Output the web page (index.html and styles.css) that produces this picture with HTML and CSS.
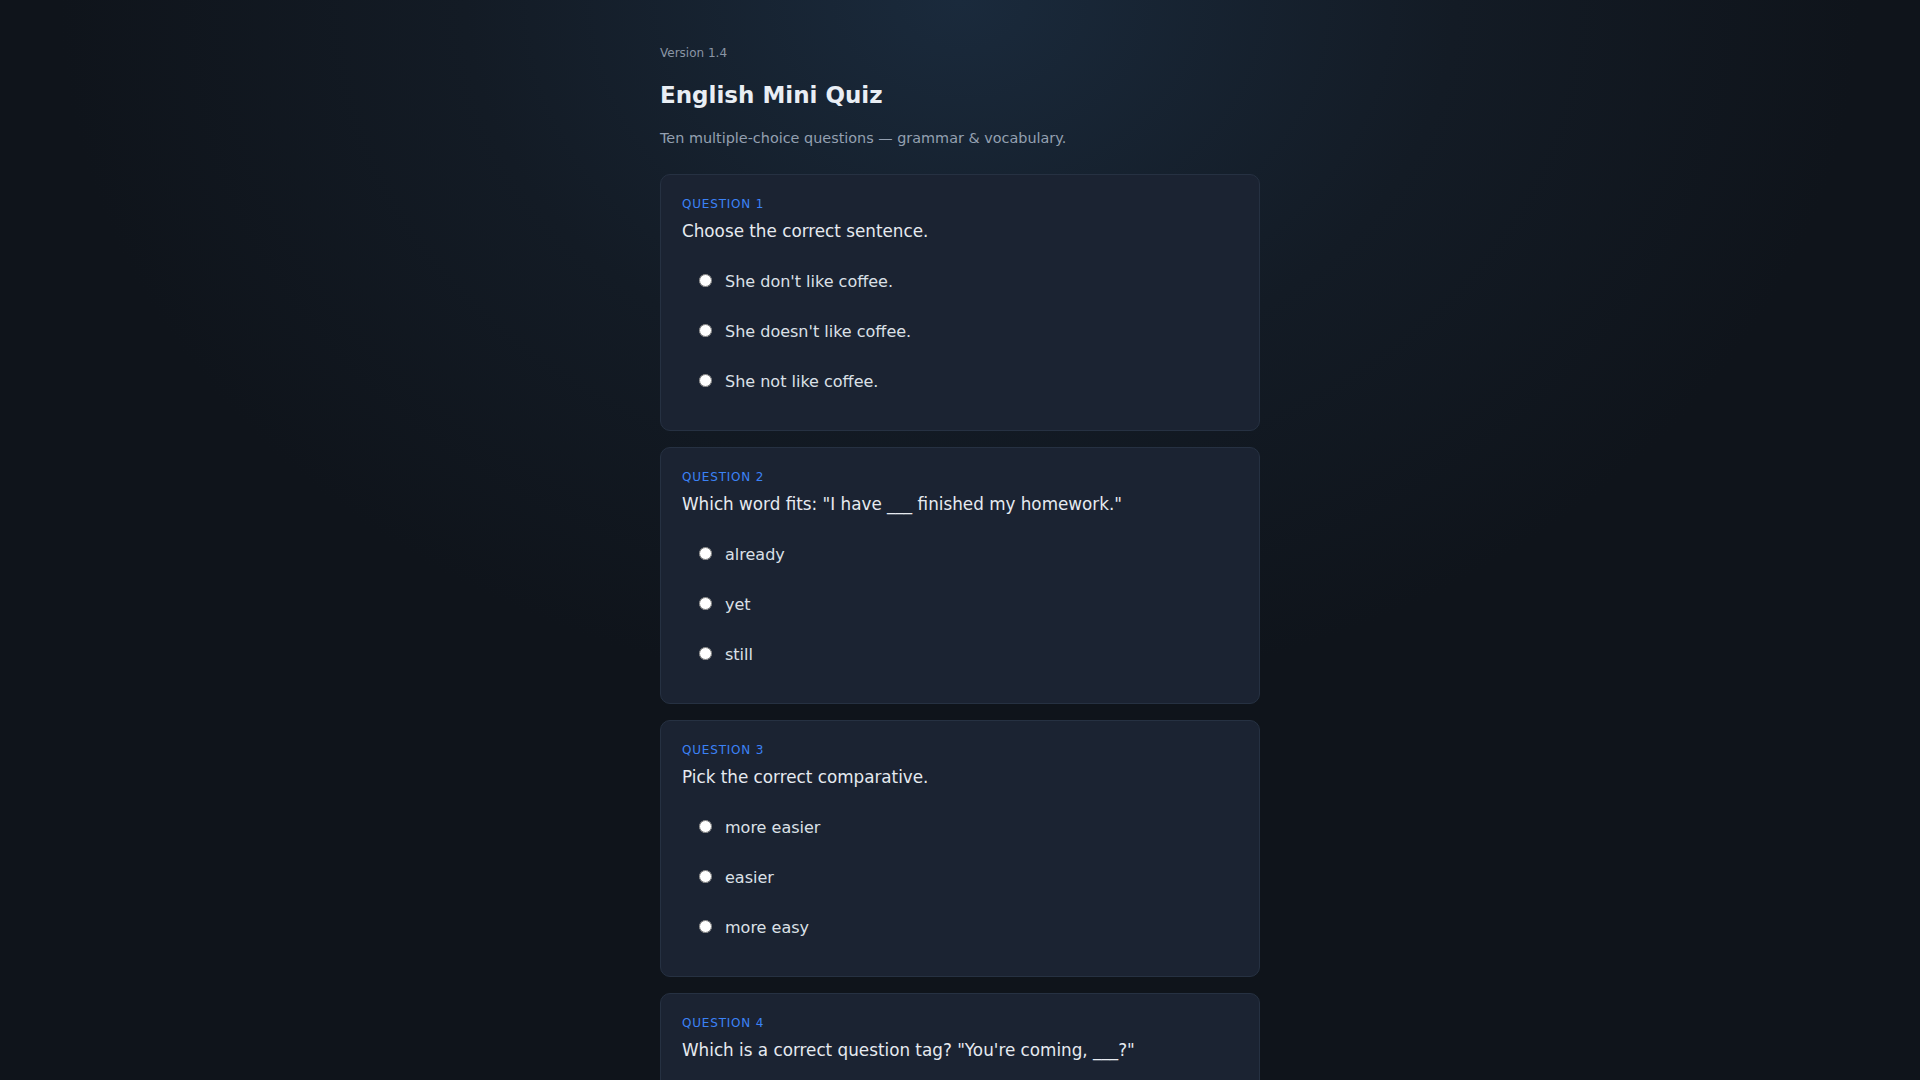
FILE: index.html
```html
<!DOCTYPE html>
<html>
    <head>
        <title>English Mini Quiz</title>
        <link rel="stylesheet" href="styles.css">
    </head>
    <body>
        <div class="container">
            <div class="version">Version 1.4</div>
            <h1 class="title">English Mini Quiz</h1>
            <p class="subtitle">Ten multiple-choice questions &mdash; grammar &amp; vocabulary.</p>

            <div class="card">
                <div class="q-label">QUESTION 1</div>
                <div class="q-text">Choose the correct sentence.</div>
                <div class="options">
                    <label class="option"><input type="radio" name="q1"> She don't like coffee.</label>
                    <label class="option"><input type="radio" name="q1"> She doesn't like coffee.</label>
                    <label class="option"><input type="radio" name="q1"> She not like coffee.</label>
                </div>
            </div>

            <div class="card">
                <div class="q-label">QUESTION 2</div>
                <div class="q-text">Which word fits: "I have ___ finished my homework."</div>
                <div class="options">
                    <label class="option"><input type="radio" name="q2"> already</label>
                    <label class="option"><input type="radio" name="q2"> yet</label>
                    <label class="option"><input type="radio" name="q2"> still</label>
                </div>
            </div>

            <div class="card">
                <div class="q-label">QUESTION 3</div>
                <div class="q-text">Pick the correct comparative.</div>
                <div class="options">
                    <label class="option"><input type="radio" name="q3"> more easier</label>
                    <label class="option"><input type="radio" name="q3"> easier</label>
                    <label class="option"><input type="radio" name="q3"> more easy</label>
                </div>
            </div>

            <div class="card">
                <div class="q-label">QUESTION 4</div>
                <div class="q-text">Which is a correct question tag? "You're coming, ___?"</div>
                <div class="options">
                    <label class="option"><input type="radio" name="q4"> aren't you</label>
                    <label class="option"><input type="radio" name="q4"> isn't it</label>
                    <label class="option"><input type="radio" name="q4"> don't you</label>
                </div>
            </div>
        </div>
    </body>
</html>
```

FILE: styles.css
```css
body {
    margin: 0;
    min-height: 100vh;
    font-family: "DejaVu Sans", sans-serif;
    color: #e5e9ef;
    background-color: #0f141b;
    background-image: radial-gradient(ellipse 900px 700px at 50% 0%, #1a2a3c 0%, #131b25 55%, #0f141b 100%);
    background-repeat: no-repeat;
}
.container {
    width: 600px;
    margin: 0 auto;
    padding-top: 45px;
}
.version {
    font-size: 12px;
    line-height: 16px;
    color: #8a95a5;
}
.title {
    margin: 19px 0 0;
    font-size: 23px;
    line-height: 30px;
    font-weight: bold;
    color: #e9eef4;
}
.subtitle {
    margin: 18px 0 0;
    font-size: 14.4px;
    line-height: 20px;
    color: #94a0b1;
}
.card {
    margin-top: 26px;
    padding: 21px 21px 23px;
    background-color: #1b2332;
    border: 1px solid #263142;
    border-radius: 10px;
}
.card + .card {
    margin-top: 16px;
}
.q-label {
    font-size: 12px;
    line-height: 16px;
    letter-spacing: 0.8px;
    color: #3b82f6;
}
.q-text {
    margin-top: 7px;
    font-size: 16.8px;
    line-height: 25px;
    color: #e6eaf0;
}
.options {
    margin-top: 13px;
}
.option {
    display: flex;
    align-items: center;
    padding: 12px 0;
    font-size: 16px;
    line-height: 26px;
    color: #dbe0e7;
}
.option input {
    margin: -3px 13px 0 17px;
}
```
